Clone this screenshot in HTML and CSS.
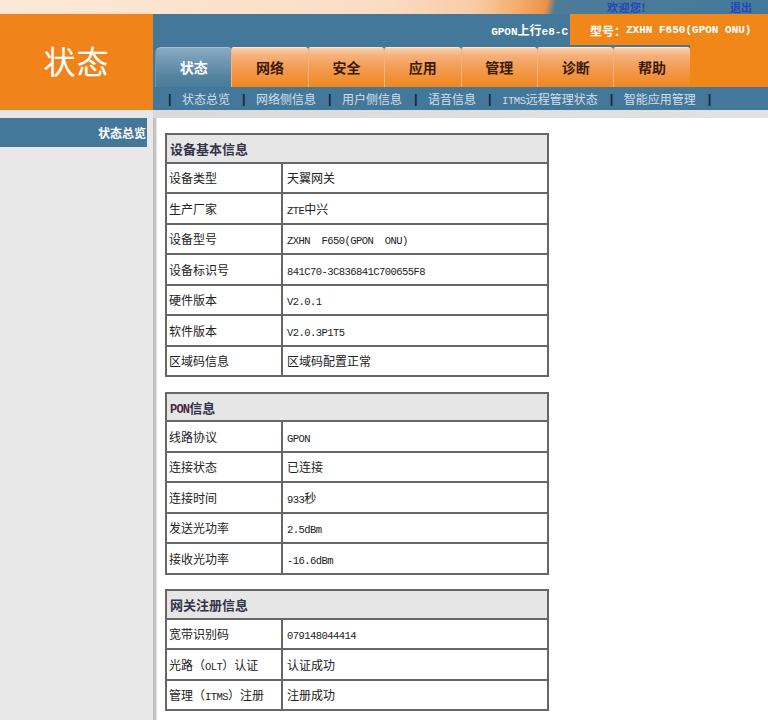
FILE: index.html
```html
<!DOCTYPE html>
<html lang="zh-CN">
<head>
<meta charset="utf-8">
<title>状态</title>
<link rel="stylesheet" href="styles.css">
</head>
<body>
<div class="top">
  <span class="welcome">欢迎您!</span>
  <span class="logout">退出</span>
</div>
<div class="head">
  <div class="logo">状态</div>
  <div class="head-r">
    <div class="hbar">
      <span class="gpon"><span class="hm">GPON</span>上行<span class="hm">e8-C</span></span>
      <div class="model">型号：<span class="hm">ZXHN F650(GPON ONU)</span></div>
    </div>
    <div class="tabrow">
      <div class="tabs">
        <div class="tab active">状态</div>
        <div class="tab">网络</div>
        <div class="tab">安全</div>
        <div class="tab">应用</div>
        <div class="tab">管理</div>
        <div class="tab">诊断</div>
        <div class="tab">帮助</div>
      </div>
      <div class="fill"></div>
    </div>
    <div class="subnav">
      <span class="sep">|</span><span class="sub">状态总览</span>
      <span class="sep">|</span><span class="sub">网络侧信息</span>
      <span class="sep">|</span><span class="sub">用户侧信息</span>
      <span class="sep">|</span><span class="sub">语音信息</span>
      <span class="sep">|</span><span class="sub"><span class="sm">ITMS</span>远程管理状态</span>
      <span class="sep">|</span><span class="sub">智能应用管理</span>
      <span class="sep">|</span>
    </div>
  </div>
</div>
<div class="band"></div>
<div class="main">
  <aside class="side">
    <div class="side-item">状态总览</div>
  </aside>
  <section class="content">
    <table class="info">
      <tr><th colspan="2">设备基本信息</th></tr>
      <tr><td class="k">设备类型</td><td class="v">天翼网关</td></tr>
      <tr><td class="k">生产厂家</td><td class="v"><span class="m">ZTE</span>中兴</td></tr>
      <tr><td class="k">设备型号</td><td class="v"><span class="m">ZXHN  F650(GPON  ONU)</span></td></tr>
      <tr><td class="k">设备标识号</td><td class="v"><span class="m">841C70-3C836841C700655F8</span></td></tr>
      <tr><td class="k">硬件版本</td><td class="v"><span class="m">V2.0.1</span></td></tr>
      <tr><td class="k">软件版本</td><td class="v"><span class="m">V2.0.3P1T5</span></td></tr>
      <tr><td class="k">区域码信息</td><td class="v">区域码配置正常</td></tr>
    </table>
    <table class="info">
      <tr><th colspan="2"><span class="tm">PON</span>信息</th></tr>
      <tr><td class="k">线路协议</td><td class="v"><span class="m">GPON</span></td></tr>
      <tr><td class="k">连接状态</td><td class="v">已连接</td></tr>
      <tr><td class="k">连接时间</td><td class="v"><span class="m">933</span>秒</td></tr>
      <tr><td class="k">发送光功率</td><td class="v"><span class="m">2.5dBm</span></td></tr>
      <tr><td class="k">接收光功率</td><td class="v"><span class="m">-16.6dBm</span></td></tr>
    </table>
    <table class="info">
      <tr><th colspan="2">网关注册信息</th></tr>
      <tr><td class="k">宽带识别码</td><td class="v"><span class="m">079148044414</span></td></tr>
      <tr><td class="k">光路（<span class="m">OLT</span>）认证</td><td class="v">认证成功</td></tr>
      <tr><td class="k">管理（<span class="m">ITMS</span>）注册</td><td class="v">注册成功</td></tr>
    </table>
  </section>
</div>
</body>
</html>
```
FILE: styles.css
```css
* { box-sizing: border-box; }
html, body { margin: 0; padding: 0; }
body {
  width: 768px;
  height: 720px;
  overflow: hidden;
  font-family: "Noto Sans CJK SC", "Liberation Sans", sans-serif;
  background: #ffffff;
}

.top {
  height: 14px;
  display: flex;
  align-items: center;
  justify-content: flex-end;
  padding-right: 16px;
  background: linear-gradient(100deg, #fde9d8 0%, #fbdcc3 50%, #f8cba5 62%, #f3a864 68%, #ee9144 71%, #4d7c99 72.2%, #44789a 100%);
}
.welcome, .logout {
  font-size: 11px;
  font-weight: bold;
  color: #2744b8;
  line-height: 13px;
  height: 13px;
}
.welcome { margin-right: 84px; letter-spacing: 0.5px; }

.head { display: flex; height: 96px; }
.logo {
  width: 153px;
  flex: 0 0 153px;
  background: #f0841a;
  color: #ffffff;
  font-size: 32px;
  display: flex;
  align-items: center;
  justify-content: center;
  padding-bottom: 4px;
  letter-spacing: 1px;
}
.head-r {
  flex: 1;
  background: #44789a;
  display: flex;
  flex-direction: column;
}
.hbar {
  height: 31px;
  display: flex;
  justify-content: flex-end;
  align-items: center;
}
.gpon {
  color: #ffffff;
  font-size: 12px;
  font-weight: bold;
  margin-right: 2px;
}
.hm {
  font-family: "Liberation Mono", monospace;
  font-size: 11px;
  font-weight: bold;
}
.model {
  width: 198px;
  height: 31px;
  background: #f18619;
  color: #ffffff;
  font-size: 12px;
  font-weight: bold;
  display: flex;
  align-items: center;
  padding-left: 20px;
  padding-top: 1px;
}
.tabrow {
  height: 42px;
  display: flex;
}
.tabs {
  display: flex;
  margin-left: 2px;
  margin-top: 2px;
}
.tab {
  width: 76.4px;
  height: 40px;
  display: flex;
  align-items: center;
  justify-content: center;
  font-size: 14px;
  font-weight: bold;
  color: #3a1a08;
  background: linear-gradient(#fad0a8 0%, #f6b07a 20%, #f39a4e 55%, #f0891f 100%);
  border-top: 1px solid #fde6d2;
  border-left: 1px solid #f7b47c;
  border-top-left-radius: 3px;
  border-top-right-radius: 3px;
  padding-bottom: 2px;
}
.tab.active {
  color: #ffffff;
  background: linear-gradient(#8aabc2 0%, #6f97b2 35%, #54839f 75%, #4a7c9c 100%);
  border-top: 1px solid #a7c0d1;
  border-left: 1px solid #6f97b2;
  border-top-left-radius: 6px;
}
.fill {
  flex: 1;
  background: #f18619;
}
.subnav {
  height: 23px;
  display: flex;
  align-items: center;
  padding-left: 15px;
  font-size: 12px;
  color: #d2dfe9;
}
.sep {
  color: #15283a;
  font-family: "Liberation Sans", sans-serif;
  font-size: 13px;
  font-weight: bold;
  width: 3px;
}
.sub { padding: 0 12px 0 11px; }
.sm {
  font-family: "Liberation Mono", monospace;
  font-size: 10.5px;
  letter-spacing: -0.4px;
}

.band {
  height: 8px;
  background: linear-gradient(90deg, #e6e6e6 0, #e6e6e6 153px, #dadada 153px, #e2e2e2 100%);
}
.main {
  display: flex;
  height: 602px;
}
.side {
  width: 153px;
  flex: 0 0 153px;
  background: #e8e8e8;
}
.side-item {
  width: 147px;
  height: 29px;
  background: #44789a;
  color: #ffffff;
  font-size: 12px;
  font-weight: bold;
  display: flex;
  align-items: center;
  justify-content: flex-end;
  padding-right: 1px;
}
.content {
  flex: 1;
  background: #ffffff;
  border-left: 3px solid #c2c2c2;
  box-shadow: inset 1px 0 0 #e4e4e4;
  padding: 15px 0 0 9px;
}
.info {
  width: 384px;
  border-collapse: separate;
  border-spacing: 0;
  border-top: 2px solid #676767;
  border-left: 2px solid #676767;
  margin-bottom: 14.5px;
}
.info th, .info td {
  height: 30.5px;
  border-right: 2px solid #676767;
  border-bottom: 2px solid #676767;
  padding: 0;
  text-align: left;
  font-size: 12px;
  color: #222222;
  white-space: pre;
}
.info tr:first-child th { height: 28.5px; }
.info th {
  background: #e6e6e6;
  font-size: 13px;
  font-weight: bold;
  color: #33334a;
  padding-left: 3px;
  padding-top: 1px;
}
.info td.k {
  width: 116px;
  padding-left: 2px;
}
.info td.v { padding-left: 4px; }
.m {
  font-family: "Liberation Mono", monospace;
  font-size: 10.5px;
  letter-spacing: -0.55px;
  color: #222222;
}
.tm {
  font-family: "Liberation Mono", monospace;
  font-size: 12px;
  font-weight: bold;
  letter-spacing: -0.8px;
  color: #4a2640;
}
```
